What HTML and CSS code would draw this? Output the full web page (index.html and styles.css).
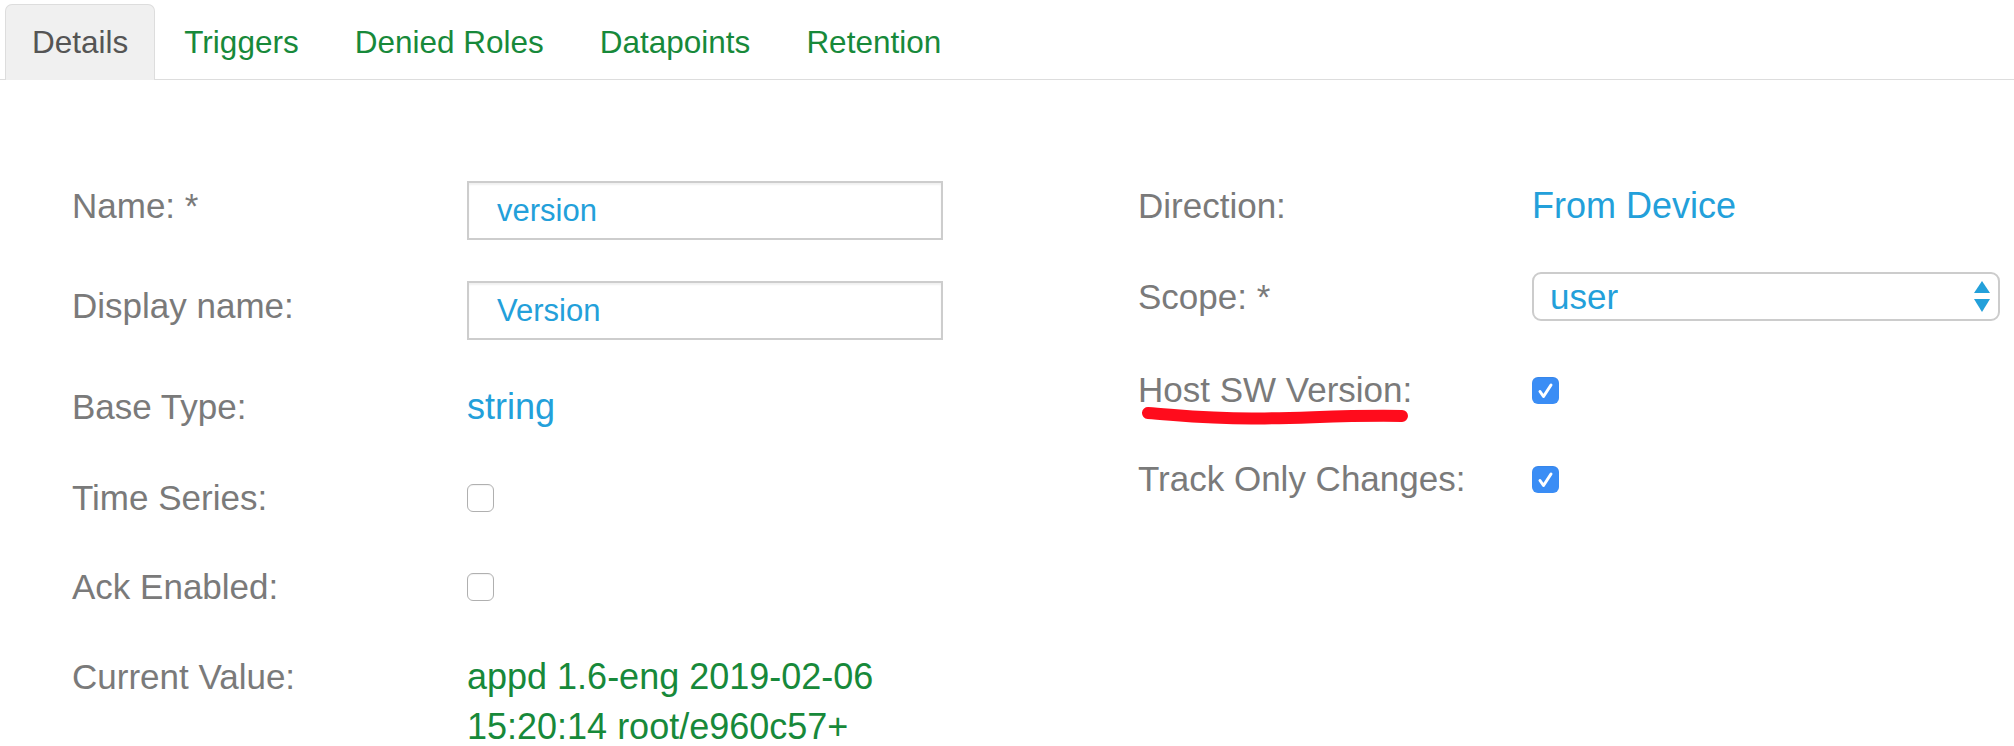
FILE: index.html
```html
<!DOCTYPE html>
<html lang="en">
<head>
<meta charset="utf-8">
<title>Datapoint Details</title>
<link rel="stylesheet" href="styles.css">
</head>
<body>
<nav class="tabs">
  <a class="tab active">Details</a>
  <a class="tab">Triggers</a>
  <a class="tab">Denied Roles</a>
  <a class="tab">Datapoints</a>
  <a class="tab">Retention</a>
</nav>
<div class="form">
  <div class="col col-left">
    <div class="row row-input">
      <span class="label">Name: *</span>
      <div class="input">version</div>
    </div>
    <div class="row row-input">
      <span class="label">Display name:</span>
      <div class="input">Version</div>
    </div>
    <div class="row row-text row-tall">
      <span class="label">Base Type:</span>
      <span class="value">string</span>
    </div>
    <div class="row row-check">
      <span class="label">Time Series:</span>
      <span class="check"></span>
    </div>
    <div class="row row-check">
      <span class="label">Ack Enabled:</span>
      <span class="check"></span>
    </div>
    <div class="row row-multi">
      <span class="label">Current Value:</span>
      <span class="value value-green">appd 1.6-eng 2019-02-06 15:20:14 root/e960c57+</span>
    </div>
  </div>
  <div class="col col-right">
    <div class="row row-text">
      <span class="label">Direction:</span>
      <span class="value">From Device</span>
    </div>
    <div class="row row-select">
      <span class="label">Scope: *</span>
      <div class="select">
        <span>user</span>
        <svg class="arrows" width="16" height="31" viewBox="0 0 16 31"><polygon points="0,12 8,0 16,12" fill="#23a0da"/><polygon points="0,18 16,18 8,31" fill="#23a0da"/></svg>
      </div>
    </div>
    <div class="row row-check">
      <span class="label label-marked">Host SW Version:
        <svg class="scribble" width="280" height="30" viewBox="0 0 280 30"><path d="M10 9 C 40 11, 70 15, 120 14.5 S 210 11, 264 12" fill="none" stroke="#ff0c1c" stroke-width="12" stroke-linecap="round"/></svg>
      </span>
      <span class="check checked"><svg width="27" height="27" viewBox="0 0 27 27"><path d="M8 14.5 L11.5 19.5 L19 8" fill="none" stroke="#fff" stroke-width="3" stroke-linecap="round" stroke-linejoin="round"/></svg></span>
    </div>
    <div class="row row-check">
      <span class="label">Track Only Changes:</span>
      <span class="check checked"><svg width="27" height="27" viewBox="0 0 27 27"><path d="M8 14.5 L11.5 19.5 L19 8" fill="none" stroke="#fff" stroke-width="3" stroke-linecap="round" stroke-linejoin="round"/></svg></span>
    </div>
  </div>
</div>
</body>
</html>
```
FILE: styles.css
```css
body {
  margin: 0;
  background: #fff;
  font-family: "Liberation Sans", Arial, sans-serif;
}

.tabs {
  display: flex;
  box-sizing: border-box;
  height: 80px;
  padding: 4px 0 0 5px;
  border-bottom: 1px solid #dddddd;
}

.tab {
  box-sizing: border-box;
  height: 76px;
  margin: 0 2px -1px 0;
  padding: 0 26px;
  display: flex;
  align-items: center;
  border: 1px solid transparent;
  border-bottom: none;
  border-radius: 7px 7px 0 0;
  font-size: 31.5px;
  color: #17893a;
}

.tab.active {
  background: #f0f0f0;
  border-color: #dddddd;
  color: #555555;
}

.form {
  display: flex;
  gap: 195px;
  padding: 101px 0 0 72px;
}

.col {
  display: flex;
  flex-direction: column;
  gap: 41px;
}

.row {
  display: flex;
  align-items: flex-start;
}

.label {
  flex: none;
  width: 395px;
  font-size: 35px;
  line-height: 50px;
  color: #7a7a7a;
}

.col-right .label {
  width: 394px;
}

.value {
  font-size: 36px;
  line-height: 50px;
  color: #23a0da;
}

.row-tall {
  height: 52px;
}

.row-tall .label,
.row-tall .value {
  line-height: 52px;
}

.row-input {
  height: 59px;
}

.input {
  box-sizing: border-box;
  width: 476px;
  height: 59px;
  padding: 0 0 0 28px;
  display: flex;
  align-items: center;
  border: 2px solid #cdcdcd;
  box-shadow: inset 0 2px 2px rgba(0, 0, 0, 0.06);
  font-size: 31px;
  color: #23a0da;
}

.row-check {
  height: 48px;
  align-items: center;
}

.row-check .label {
  line-height: 48px;
}

.check {
  box-sizing: border-box;
  width: 27px;
  height: 28px;
  border: 1px solid #b0b0b0;
  border-radius: 6px;
  background: #fff;
  box-shadow: inset 0 1px 1px rgba(0, 0, 0, 0.05);
}

.check.checked {
  height: 27px;
  border: none;
  background: #3a8df5;
}

.check svg {
  display: block;
}

.row-multi {
  width: 871px;
}

.row-multi .label,
.row-multi .value {
  line-height: 50px;
}

.value-green {
  width: 476px;
  color: #17893a;
}

.row-select {
  height: 53px;
}

.select {
  box-sizing: border-box;
  width: 468px;
  height: 49px;
  padding: 0 8px 0 16px;
  display: flex;
  align-items: center;
  justify-content: space-between;
  border: 2px solid #cccccc;
  border-radius: 9px;
  font-size: 35px;
  color: #23a0da;
}

.arrows {
  display: block;
}

.label-marked {
  position: relative;
}

.scribble {
  position: absolute;
  left: 0;
  top: 38px;
}
```
